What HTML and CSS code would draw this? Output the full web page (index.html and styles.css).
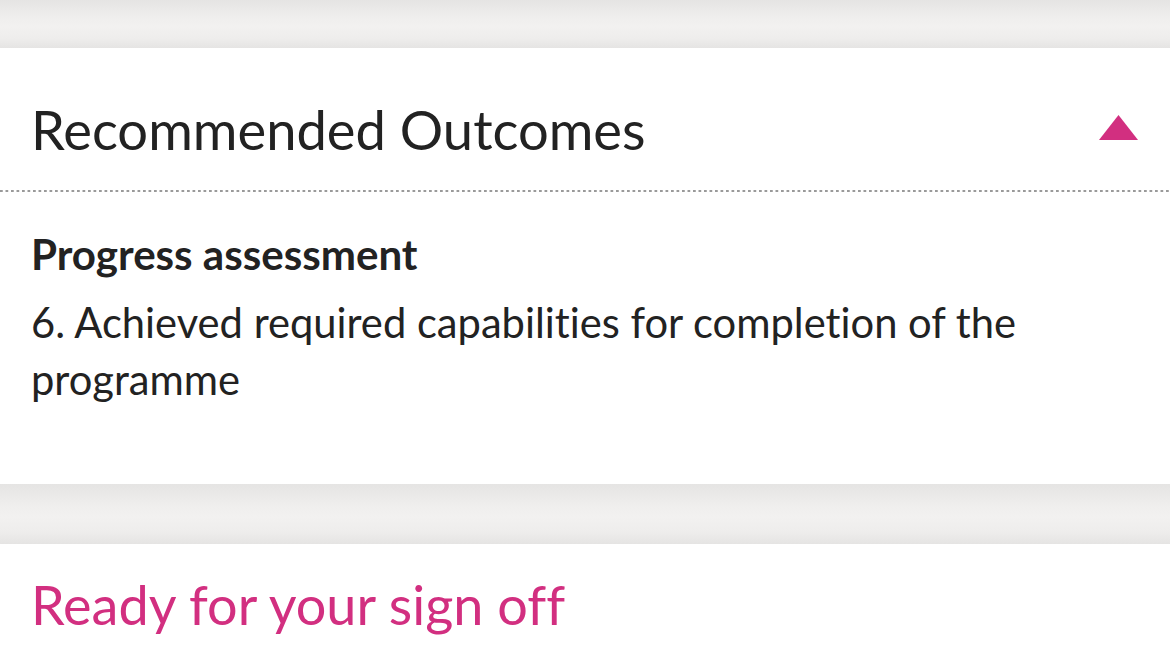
FILE: index.html
```html
<!DOCTYPE html>
<html>
<head>
<meta charset="utf-8">
<link rel="stylesheet" href="styles.css">
</head>
<body>
<div class="band band-top"></div>
<section class="card">
  <div class="card-header">
    <h2 class="card-title">Recommended Outcomes</h2>
    <svg class="toggle" width="39" height="25" viewBox="0 0 39 25"><polygon points="19.5,0 39,25 0,25" fill="#d22f80"/></svg>
  </div>
  <div class="card-body">
    <h3 class="label">Progress assessment</h3>
    <p class="value">6. Achieved required capabilities for completion of the programme</p>
  </div>
</section>
<div class="band band-mid"></div>
<section class="card card-sign">
  <h2 class="sign-title">Ready for your sign off</h2>
</section>
</body>
</html>
```
FILE: styles.css
```css
* { box-sizing: border-box; }
html, body { margin: 0; padding: 0; }
body {
  width: 1170px;
  height: 664px;
  overflow: hidden;
  background: #ffffff;
  font-family: Lato, "Open Sans", sans-serif;
  font-variant-ligatures: none;
  color: #222222;
}
.band {
  background: linear-gradient(to bottom, #e5e4e3 0%, #efeeed 35%, #f2f1f0 55%, #eeedec 80%, #e5e4e3 100%);
}
.band-top { height: 48px; }
.band-mid { height: 60px; }
.card { background: #ffffff; }
.card-header {
  height: 144px;
  display: flex;
  align-items: center;
  justify-content: space-between;
  padding: 0 32px 0 31px;
  background-image: linear-gradient(to right, #9a9a9a 0 3px, transparent 3px);
  background-size: 5.5px 2px;
  background-repeat: repeat-x;
  background-position: 0 142px;
}
.card-title {
  margin: 0;
  font-size: 54.3px;
  font-weight: 400;
  line-height: 1;
  color: #222222;
  padding-top: 18px;
}
.toggle { display: block; margin-top: 15px; }
.card-body {
  padding: 34px 31px 0;
  height: 292px;
}
.label {
  margin: 0;
  font-size: 42.1px;
  font-weight: 700;
  line-height: 56px;
  color: #222222;
}
.value {
  margin: 12px 0 0;
  font-size: 41.7px;
  font-weight: 400;
  line-height: 57px;
  color: #222222;
  max-width: 1020px;
}
.card-sign {
  height: 120px;
  padding: 29px 31px 0;
}
.sign-title {
  margin: 0;
  font-size: 54px;
  font-weight: 400;
  line-height: 1.2;
  color: #d22f80;
}
```
